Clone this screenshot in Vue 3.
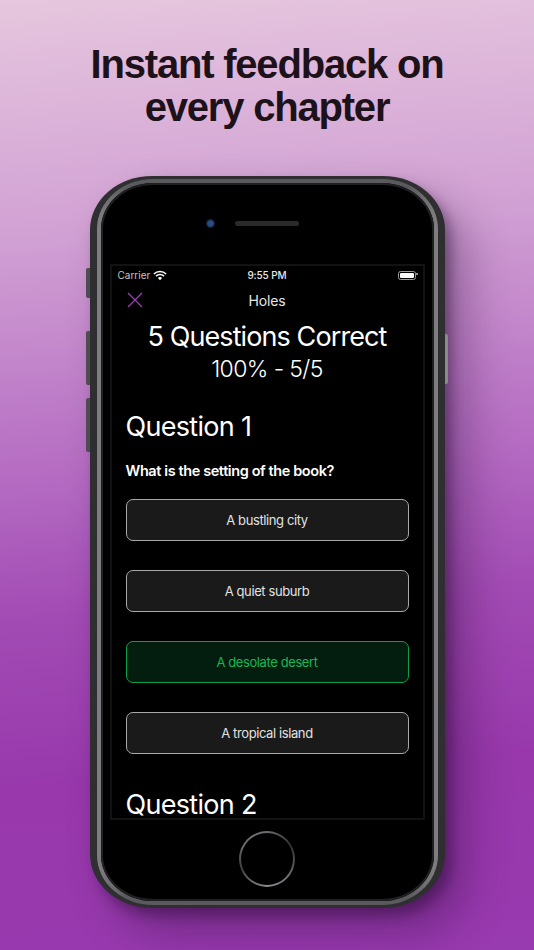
<script setup>
const options = [
  { label: 'A bustling city', correct: false },
  { label: 'A quiet suburb', correct: false },
  { label: 'A desolate desert', correct: true },
  { label: 'A tropical island', correct: false },
]
</script>

<template>
  <main class="page">
    <h1 class="headline">Instant feedback on<br />every chapter</h1>
    <div class="phone">
      <i class="side-btn mute"></i>
      <i class="side-btn vol-up"></i>
      <i class="side-btn vol-down"></i>
      <i class="side-btn power"></i>
      <div class="band">
        <div class="bezel">
          <div class="top-bar">
            <span class="camera"></span>
            <span class="speaker"></span>
          </div>
          <div class="screen">
            <div class="status">
              <span class="carrier">
                Carrier
                <svg class="wifi" viewBox="0 0 16 12" width="14" height="11">
                  <path d="M1 4.2a10 10 0 0 1 14 0" fill="none" stroke="#fff" stroke-width="1.7" />
                  <path d="M3.4 6.7a6.6 6.6 0 0 1 9.2 0" fill="none" stroke="#fff" stroke-width="1.7" />
                  <path d="M8 11.4 5.6 8.9a3.4 3.4 0 0 1 4.8 0z" fill="#fff" />
                </svg>
              </span>
              <span class="time">9:55 PM</span>
              <span class="battery"><b></b></span>
            </div>
            <div class="nav">
              <svg class="close" viewBox="0 0 16 16" width="16" height="16">
                <path d="M1 1l14 14M15 1 1 15" stroke="#9b3eb4" stroke-width="1.3" fill="none" />
              </svg>
              <span>Holes</span>
            </div>
            <div class="score">
              <div class="score-main">5 Questions Correct</div>
              <div class="score-sub">100% - 5/5</div>
            </div>
            <div class="quiz">
              <h2>Question 1</h2>
              <p class="prompt">What is the setting of the book?</p>
              <div class="options">
                <div
                  v-for="o in options"
                  :key="o.label"
                  class="option"
                  :class="{ correct: o.correct }"
                >{{ o.label }}</div>
              </div>
              <h2 class="next">Question 2</h2>
            </div>
          </div>
          <div class="home-row"><span class="home"><span></span></span></div>
        </div>
      </div>
    </div>
  </main>
</template>

<style scoped>
.page {
  width: 534px;
  height: 950px;
  overflow: hidden;
  display: flex;
  flex-direction: column;
  align-items: center;
  background: linear-gradient(176deg, #e6c6de 0%, #d09fd3 25%, #b368c1 50%, #a24bb4 63%, #9838ac 80%, #983ab0 100%);
  font-family: Inter, "Liberation Sans", sans-serif;
}
.headline {
  margin: 43px 0 0;
  text-align: center;
  font-family: "Liberation Sans", Arial, sans-serif;
  font-size: 40px;
  line-height: 43px;
  font-weight: 700;
  letter-spacing: -1.2px;
  color: #1d1219;
}
.phone {
  position: relative;
  margin-top: 47px;
  width: 355px;
  height: 732px;
  box-sizing: border-box;
  padding: 3px 7px;
  border-radius: 62px / 54px;
  background: #2f2f32;
  box-shadow: 6px 8px 12px rgba(30, 5, 40, .35), 22px 24px 44px rgba(30, 5, 40, .32);
}
.band {
  height: 100%;
  box-sizing: border-box;
  padding: 4px;
  border-radius: 56px / 50px;
  background: linear-gradient(90deg, #808082 0, #5a5a5e 30px, #5a5a5e calc(100% - 30px), #808082 100%);
}
.bezel {
  height: 100%;
  box-sizing: border-box;
  border-radius: 52px / 46px;
  background: #000;
  box-shadow: inset 0 0 0 2px #202022;
  display: flex;
  flex-direction: column;
  padding: 0 9px;
}
.side-btn {
  position: absolute;
  width: 4px;
  background: #4d4c50;
  border-radius: 2px 0 0 2px;
}
.mute { left: -4px; top: 92px; height: 30px; }
.vol-up { left: -4px; top: 155px; height: 54px; }
.vol-down { left: -4px; top: 222px; height: 54px; }
.power { left: 355px; top: 158px; height: 50px; background: #8a8a8e; border-radius: 0 2px 2px 0; width: 3px; }
.top-bar {
  height: 81px;
  flex: none;
  position: relative;
}
.camera {
  position: absolute;
  left: 96px;
  top: 36px;
  width: 9px;
  height: 9px;
  border-radius: 50%;
  background: radial-gradient(circle, #2a4d86 0 35%, #101a2c 70%);
}
.speaker {
  position: absolute;
  left: 125px;
  top: 38px;
  width: 64px;
  height: 5px;
  border-radius: 3px;
  background: #2a2a2c;
}
.screen {
  flex: none;
  height: 556px;
  box-sizing: border-box;
  border: 2px solid #121212;
  background: #000;
  overflow: hidden;
  color: #fff;
}
.status {
  height: 18px;
  display: flex;
  align-items: center;
  justify-content: space-between;
  padding: 0 7px 0 6px;
  font-size: 10px;
  color: #e8e8e8;
  position: relative;
}
.carrier { display: flex; align-items: center; gap: 3px; font-size: 10px; color: #c8c8c8; }
.time {
  position: absolute;
  left: 0;
  right: 0;
  text-align: center;
  font-weight: 500;
  letter-spacing: -.1px;
  pointer-events: none;
}
.battery {
  position: relative;
  width: 14px;
  height: 5px;
  border: 1px solid #9a9a9a;
  border-radius: 2.5px;
  padding: 1px;
  box-sizing: content-box;
  display: flex;
}
.battery::after {
  content: "";
  position: absolute;
  right: -3px;
  top: 1.5px;
  width: 1.5px;
  height: 2px;
  background: #888;
}
.battery b { flex: 1; background: #fff; border-radius: 1px; }
.nav {
  height: 32px;
  display: flex;
  align-items: center;
  justify-content: center;
  position: relative;
  font-size: 14px;
  letter-spacing: -.1px;
  color: #e6e6e6;
}
.close { position: absolute; left: 15px; top: 8px; }
.score { text-align: center; }
.score-main { font-size: 27px; line-height: 36px; margin-top: 3px; letter-spacing: -.9px; }
.score-sub { font-size: 23px; line-height: 27px; font-weight: 300; margin-top: 1px; letter-spacing: -.6px; }
.quiz { padding: 0 14px; }
.quiz h2 {
  margin: 27px 0 0;
  font-size: 27px;
  line-height: 34px;
  font-weight: 400;
  letter-spacing: -.7px;
}
.prompt {
  margin: 18px 0 0;
  font-size: 14.5px;
  line-height: 18px;
  font-weight: 600;
  letter-spacing: -.4px;
}
.options {
  margin-top: 19px;
  display: flex;
  flex-direction: column;
  gap: 29px;
}
.option {
  height: 42px;
  box-sizing: border-box;
  border: 1.5px solid #a8a8a8;
  border-radius: 7px;
  background: #1a1a1a;
  display: flex;
  align-items: center;
  justify-content: center;
  font-size: 13px;
  letter-spacing: -.4px;
  color: #e2e2e2;
}
.option.correct {
  border-color: #0da04c;
  background: #031d0e;
  color: #14b858;
}
.quiz h2.next { margin-top: 34px; }
.home-row {
  flex: 1;
  display: flex;
  align-items: center;
  justify-content: center;
  padding-bottom: 4px;
}
.home {
  width: 56px;
  height: 56px;
  box-sizing: border-box;
  padding: 2px;
  border-radius: 50%;
  background: conic-gradient(#6e6e72, #303034 60deg, #6e6e72 130deg, #8e8e92 180deg, #404044 250deg, #6e6e72 300deg, #6e6e72);
}
.home span {
  display: block;
  height: 100%;
  border-radius: 50%;
  background: #000;
}
</style>

<style>
body { background: #9c3cb0; }
</style>
